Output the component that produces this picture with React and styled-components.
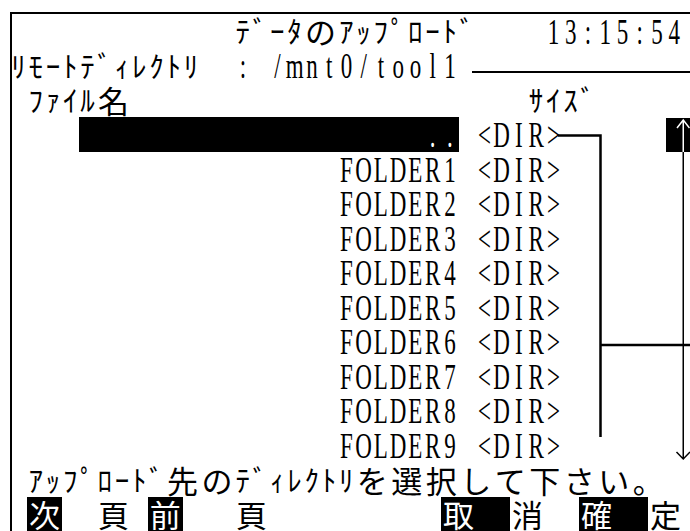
import React from 'react';
import styled, { createGlobalStyle, css } from 'styled-components';

const CELL = 17.25;
const ROW = 34.5;

const GlobalStyle = createGlobalStyle`
  html, body { margin: 0; padding: 0; background: #fff; }
  body { width: 690px; height: 531px; overflow: hidden; }
`;

const Screen = styled.div`
  width: 690px;
  height: 531px;
  overflow: hidden;
  background: #fff;
  color: #000;
  padding: 12px 0 0 10px;
  box-sizing: border-box;
`;

const Frame = styled.div`
  width: 690px;
  height: 519px;
  box-shadow: inset 2px 2px 0 #000;
  padding-top: 1.5px;
  box-sizing: border-box;
  display: flex;
  flex-direction: column;
`;

const Line = styled.div`
  flex: none;
  height: ${ROW}px;
  display: grid;
  grid-template-columns: repeat(40, ${CELL}px);
`;

const Run = styled.span`
  grid-column: ${(p) => p.$col + 1} / span ${(p) => p.$span};
  display: flex;
  height: 100%;
  justify-content: ${(p) => (p.$right ? 'flex-end' : 'flex-start')};
  ${(p) =>
    p.$inverse &&
    css`
      background: #000;
      color: #fff;
    `}
`;

const Cell = styled.span`
  flex: none;
  width: ${(p) => (p.$wide ? CELL * 2 : CELL)}px;
  height: 100%;
  display: flex;
  align-items: center;
  justify-content: center;
`;

const Glyph = styled.span`
  display: block;
  white-space: pre;
  ${(p) =>
    p.$latin
      ? css`
          font-family: 'Liberation Serif', 'Times New Roman', serif;
          font-size: 23px;
          height: 18px;
          line-height: 18px;
          transform: translateY(2px) scaleY(1.6);
        `
      : css`
          font-family: 'Noto Sans CJK JP', 'Noto Sans', sans-serif;
          font-size: ${p.$wide ? 31 : 29}px;
          height: 29px;
          line-height: 29px;
        `}
`;

const Rule = styled.div`
  grid-column: ${(p) => p.$col + 1} / -1;
  align-self: end;
  height: 2px;
  margin-bottom: 10px;
  margin-left: -4px;
  background: #000;
`;

const List = styled.div`
  flex: none;
  display: grid;
  grid-template-columns: repeat(40, ${CELL}px);
  grid-template-rows: repeat(10, ${ROW}px);
`;

const FileRow = styled.div`
  grid-row: ${(p) => p.$row};
  grid-column: 1 / -1;
  display: grid;
  grid-template-columns: repeat(40, ${CELL}px);
`;

const Connector = styled.svg`
  grid-column: 32 / 41;
  grid-row: 1 / 11;
  width: 100%;
  height: 100%;
  pointer-events: none;
`;

const ScrollTrack = styled.svg`
  grid-column: 39 / 41;
  grid-row: 1 / 11;
  width: 100%;
  height: 100%;
  pointer-events: none;
`;

const isHalf = (ch) => {
  const c = ch.codePointAt(0);
  return c < 0x2000 || (c >= 0xff61 && c <= 0xff9f);
};
const isLatin = (ch) => ch.codePointAt(0) < 0x80;
const widthOf = (s) => [...s].reduce((a, ch) => a + (isHalf(ch) ? 1 : 2), 0);

function Glyphs({ text }) {
  return [...text].map((ch, i) => (
    <Cell key={i} $wide={!isHalf(ch)}>
      {ch === ' ' ? null : (
        <Glyph $latin={isLatin(ch)} $wide={!isHalf(ch)}>
          {ch}
        </Glyph>
      )}
    </Cell>
  ));
}

function Text({ col, text, span, inverse, right }) {
  return (
    <Run $col={col} $span={span ?? widthOf(text)} $inverse={inverse} $right={right}>
      <Glyphs text={text} />
    </Run>
  );
}

const files = ['..', 'FOLDER1', 'FOLDER2', 'FOLDER3', 'FOLDER4', 'FOLDER5', 'FOLDER6', 'FOLDER7', 'FOLDER8', 'FOLDER9'];

const keys = [
  { first: '次', second: '頁', col: 1, cap: 2, gap: 4 },
  { first: '前', second: '頁', col: 8, cap: 2, gap: 5 },
  { first: '取', second: '消', col: 25, cap: 4, gap: 4 },
  { first: '確', second: '定', col: 33, cap: 4, gap: 4 },
];

export default function App() {
  return (
    <>
      <GlobalStyle />
      <Screen>
        <Frame>
          <Line>
            <Text col={13} text="ﾃﾞｰﾀのｱｯﾌﾟﾛｰﾄﾞ" />
            <Text col={31} text="13:15:54" />
          </Line>
          <Line>
            <Text col={0} text="ﾘﾓｰﾄﾃﾞｨﾚｸﾄﾘ" />
            <Text col={13} text=": /mnt0/tool1" />
            <Rule $col={27} />
          </Line>
          <Line>
            <Text col={1} text="ﾌｧｲﾙ名" />
            <Text col={30} text="ｻｲｽﾞ" />
          </Line>
          <List>
            {files.map((f, i) => (
              <FileRow key={f} $row={i + 1}>
                <Text col={4} span={22} right inverse={i === 0} text={f} />
                <Text col={27} text="<DIR>" />
              </FileRow>
            ))}
            <Connector viewBox="0 0 155.25 345" preserveAspectRatio="none">
              <path d="M13 18.5 H55.5 V320 M55.5 228 H160" fill="none" stroke="#000" strokeWidth="2.5" />
            </Connector>
            <ScrollTrack viewBox="0 0 34.5 345" preserveAspectRatio="none">
              <rect x="0" y="1" width="34.5" height="34" fill="#000" />
              <path d="M17.25 3 V35 M11 11 L17.25 3 L23.5 11" fill="none" stroke="#fff" strokeWidth="1.5" />
              <path d="M17.25 35 V342 M10.5 335 L17.25 342 L24 335" fill="none" stroke="#000" strokeWidth="1.5" />
            </ScrollTrack>
          </List>
          <Line>
            <Text col={1} text="ｱｯﾌﾟﾛｰﾄﾞ先のﾃﾞｨﾚｸﾄﾘを選択して下さい。" />
          </Line>
          <Line>
            {keys.map((k) => (
              <React.Fragment key={k.first}>
                <Text col={k.col} span={k.cap} inverse text={k.first} />
                <Text col={k.col + k.gap} text={k.second} />
              </React.Fragment>
            ))}
          </Line>
        </Frame>
      </Screen>
    </>
  );
}
